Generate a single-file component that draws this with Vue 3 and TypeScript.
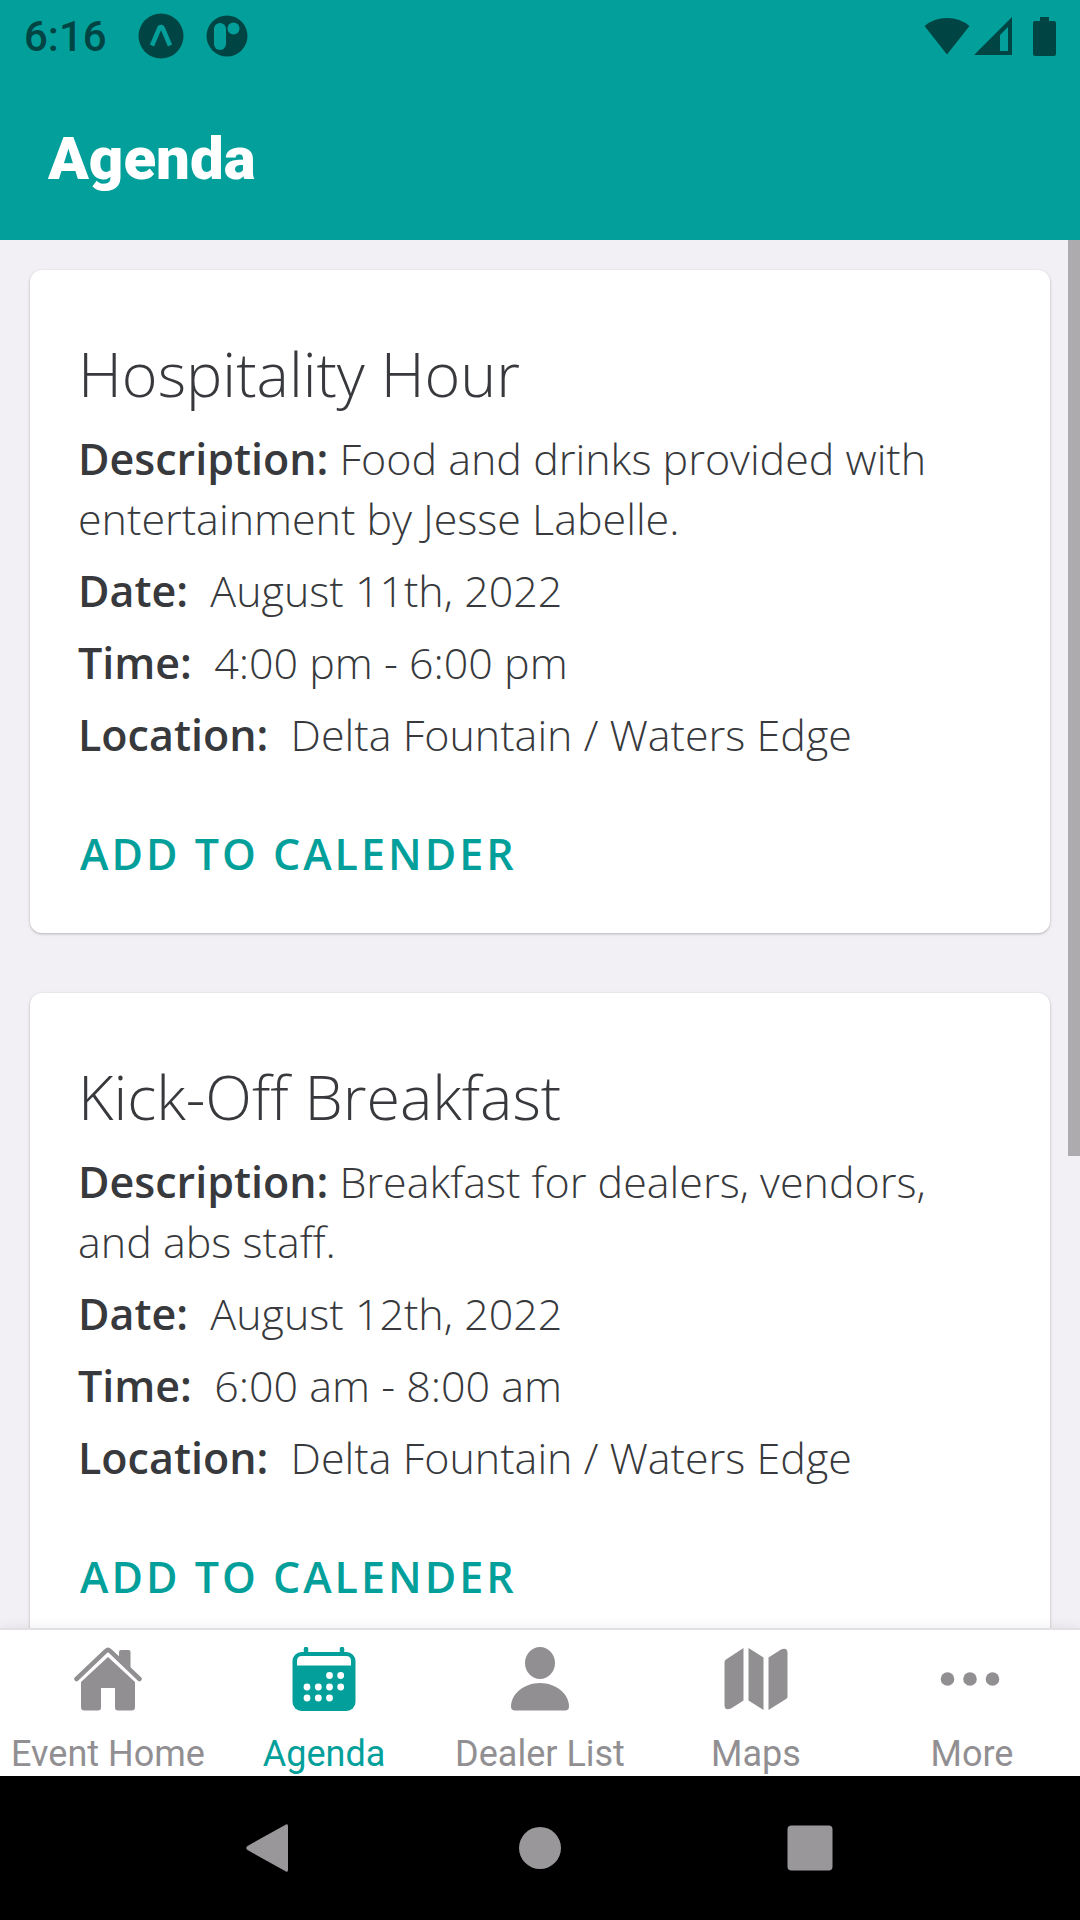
<script setup lang="ts">
import { ref } from 'vue'

interface AgendaItem {
  title: string
  description: string
  date: string
  time: string
  location: string
}

interface Tab {
  id: string
  label: string
}

const items: AgendaItem[] = [
  {
    title: 'Hospitality Hour',
    description: 'Food and drinks provided with entertainment by Jesse Labelle.',
    date: 'August 11th, 2022',
    time: '4:00 pm - 6:00 pm',
    location: 'Delta Fountain / Waters Edge',
  },
  {
    title: 'Kick-Off Breakfast',
    description: 'Breakfast for dealers, vendors, and abs staff.',
    date: 'August 12th, 2022',
    time: '6:00 am - 8:00 am',
    location: 'Delta Fountain / Waters Edge',
  },
]

const tabs: Tab[] = [
  { id: 'home', label: 'Event Home' },
  { id: 'agenda', label: 'Agenda' },
  { id: 'dealers', label: 'Dealer List' },
  { id: 'maps', label: 'Maps' },
  { id: 'more', label: 'More' },
]

const activeTab = ref('agenda')
</script>

<template>
  <div class="screen">
    <header class="header">
      <div class="status">
        <span class="clock">6:16</span>
        <svg class="status-app" width="46" height="46" viewBox="0 0 46 46" aria-hidden="true">
          <circle cx="23" cy="23" r="22.5" fill="#004543" />
          <path d="M14 32.500 L21 16 Q21.500 14 23 14 Q24.500 14 25 16 L32 32.500" fill="none" stroke="#03a09b" stroke-width="4.500" stroke-linejoin="round" />
        </svg>
        <svg class="status-app" width="42" height="42" viewBox="0 0 42 42" aria-hidden="true">
          <circle cx="21" cy="21" r="20.500" fill="#004543" />
          <rect x="8" y="8" width="12" height="27" rx="6" fill="#03a09b" />
          <circle cx="27.500" cy="13.500" r="6" fill="#03a09b" />
        </svg>
        <span class="spacer"></span>
        <svg class="wifi" width="46" height="38" viewBox="0 0 46 38" aria-hidden="true">
          <path d="M0.500 9 Q10 1 23 1 T45.500 9 L23 37.500 Z" fill="#004543" />
        </svg>
        <svg class="signal" width="38" height="38" viewBox="0 0 38 38" aria-hidden="true">
          <path fill-rule="evenodd" d="M38 0 V38 H0 Z M34 10 L26 18 V34 H34 Z" fill="#004543" />
        </svg>
        <svg class="battery" width="23" height="39" viewBox="0 0 23 39" aria-hidden="true">
          <path d="M7 0 H16 V4 H21 Q23 4 23 6 V37 Q23 39 21 39 H2 Q0 39 0 37 V6 Q0 4 2 4 H7 Z" fill="#004543" />
        </svg>
      </div>
      <h1 class="title">Agenda</h1>
    </header>

    <main class="content">
      <div class="list">
        <article v-for="item in items" :key="item.title" class="card">
          <h2>{{ item.title }}</h2>
          <p><strong>Description:</strong> {{ item.description }}</p>
          <p><strong>Date:</strong>&nbsp; {{ item.date }}</p>
          <p><strong>Time:</strong>&nbsp; {{ item.time }}</p>
          <p><strong>Location:</strong>&nbsp; {{ item.location }}</p>
          <button type="button" class="add">ADD TO CALENDER</button>
        </article>
      </div>
      <div class="scroll-thumb"></div>
    </main>

    <nav class="tabs">
      <button
        v-for="tab in tabs"
        :key="tab.id"
        type="button"
        class="tab"
        :class="{ active: tab.id === activeTab }"
        @click="activeTab = tab.id"
      >
        <svg v-if="tab.id === 'home'" width="68" height="64" viewBox="0 0 68 64" fill="currentColor" aria-hidden="true">
          <path d="M45 14 V5 Q45 3 47 3 H54.500 Q56.500 3 56.500 5 V30 L45 20 Z" />
          <path d="M2.500 37 L34 8 L65.500 37" fill="none" stroke="#fff" stroke-width="5" />
          <path d="M2.500 32 L32 4 Q34 2 36 4 L65.500 32" fill="none" stroke="currentColor" stroke-width="4.500" stroke-linecap="round" />
          <path d="M34 10 L61 35 V60 Q61 63.500 57.500 63.500 H44 Q41 63.500 41 60.500 V41 H27 V60.500 Q27 63.500 24 63.500 H10.500 Q7 63.500 7 60 V35 Z" />
        </svg>
        <svg v-else-if="tab.id === 'agenda'" width="64" height="64" viewBox="0 0 64 64" fill="currentColor" aria-hidden="true">
          <rect x="0.500" y="5" width="63" height="59" rx="9" />
          <path d="M14 2 V8 M50 2 V8" stroke="currentColor" stroke-width="4.500" stroke-linecap="round" />
          <path d="M5 18.500 V14 Q5 9 10 9 H54 Q59 9 59 14 V18.500 Z" fill="#fff" />
          <g fill="#fff">
            <circle cx="37.500" cy="28.500" r="3.400" />
            <circle cx="48.700" cy="28.500" r="3.400" />
            <circle cx="15" cy="40" r="3.400" />
            <circle cx="26.300" cy="40" r="3.400" />
            <circle cx="37.500" cy="40" r="3.400" />
            <circle cx="48.700" cy="40" r="3.400" />
            <circle cx="15" cy="51" r="3.400" />
            <circle cx="26.300" cy="51" r="3.400" />
            <circle cx="37.500" cy="51" r="3.400" />
          </g>
        </svg>
        <svg v-else-if="tab.id === 'dealers'" width="58" height="64" viewBox="0 0 58 64" fill="currentColor" aria-hidden="true">
          <ellipse cx="29" cy="16" rx="15" ry="16" />
          <path d="M4 63.500 Q0 63.500 0 59.500 C0 47 13 36 29 36 S58 47 58 59.500 Q58 63.500 54 63.500 Z" />
        </svg>
        <svg v-else-if="tab.id === 'maps'" width="64" height="64" viewBox="0 0 64 64" fill="currentColor" aria-hidden="true">
          <path d="M19.500 1 V53.500 L7 61.500 Q0.500 64 0.500 58 V15 Q0.500 13.500 2 12.500 Z" />
          <path d="M24.500 1 L39.500 10.500 V63 L24.500 53.500 Z" />
          <path d="M44.500 10.500 L57 2.500 Q63.500 0 63.500 6 V49.500 Q63.500 51 62 52 L44.500 63 Z" />
        </svg>
        <svg v-else width="64" height="64" viewBox="0 0 64 64" fill="currentColor" aria-hidden="true">
          <circle cx="7.500" cy="32" r="6.800" />
          <circle cx="30" cy="32" r="6.800" />
          <circle cx="52.500" cy="32" r="6.800" />
        </svg>
        <span>{{ tab.label }}</span>
      </button>
    </nav>

    <footer class="system-nav">
      <button type="button" aria-label="Back">
        <svg width="48" height="48" viewBox="0 0 48 48"><path d="M40 0.500 Q42 -0.500 42 2.500 V45.500 Q42 48.500 40 47.500 L1.500 26 Q-1 24 1.500 22 Z" fill="#9a979b" /></svg>
      </button>
      <button type="button" aria-label="Home">
        <svg width="48" height="48" viewBox="0 0 48 48"><circle cx="24" cy="24" r="21" fill="#9a979b" /></svg>
      </button>
      <button type="button" aria-label="Recent apps">
        <svg width="48" height="48" viewBox="0 0 48 48"><rect x="1.500" y="1.500" width="45" height="45" rx="4" fill="#9a979b" /></svg>
      </button>
    </footer>
  </div>
</template>

<style>
body {
  margin: 0;
}
</style>

<style scoped>
.screen {
  display: flex;
  flex-direction: column;
  height: 100vh;
  background: #f2f0f4;
  font-family: Roboto, sans-serif;
}

button {
  margin: 0;
  padding: 0;
  border: 0;
  background: none;
  font: inherit;
  cursor: pointer;
}

.header {
  flex: none;
  background: #03a09b;
}

.status {
  display: flex;
  align-items: center;
  height: 72px;
  padding: 0 24px;
}

.clock {
  margin-right: 31px;
  color: #004543;
  font-size: 42px;
  font-weight: 500;
}

.status-app {
  margin-right: 22px;
}

.spacer {
  flex: 1;
}

.signal {
  margin: 0 21px 0 4px;
}

.title {
  margin: 0;
  padding: 51px 48px 45px;
  color: #fff;
  font-size: 60px;
  font-weight: 900;
  line-height: 72px;
}

.content {
  position: relative;
  flex: 1;
  min-height: 0;
  overflow: hidden;
}

.list {
  display: flex;
  flex-direction: column;
  gap: 60px;
  padding: 30px;
}

.card {
  padding: 61px 48px 48px;
  border-radius: 12px;
  background: #fff;
  box-shadow: 0 1px 3px rgba(0, 0, 0, 0.26);
  color: #37393c;
  font-family: 'Open Sans', sans-serif;
}

.card h2 {
  margin: 0;
  font-size: 61px;
  font-weight: 300;
  line-height: 86px;
}

.card p {
  margin: 12px 0 0;
  font-size: 43px;
  font-weight: 300;
  line-height: 60px;
}

.card strong {
  font-weight: 600;
}

.card .add {
  display: block;
  margin-top: 60px;
  padding: 0 2px;
  color: #03a09b;
  font-size: 43px;
  font-weight: 600;
  line-height: 58px;
  letter-spacing: 3px;
  padding-bottom: 2px;
}

.scroll-thumb {
  position: absolute;
  top: 0;
  right: 0;
  width: 12px;
  height: 66%;
  background: #adabae;
}

.tabs {
  position: relative;
  display: flex;
  flex: none;
  border-top: 2px solid #e2e0e4;
  background: #fff;
  box-shadow: 0 0 12px rgba(0, 0, 0, 0.08);
}

.tab {
  display: flex;
  flex: 1 1 0;
  flex-direction: column;
  align-items: center;
  gap: 22px;
  min-width: 0;
  padding: 17px 0 1px;
  color: #918f92;
  font-size: 36px;
  line-height: 42px;
  white-space: nowrap;
}

.tab.active {
  color: #03a09b;
}

.system-nav {
  position: relative;
  display: flex;
  flex: none;
  height: 144px;
  padding: 0 12.5%;
  background: #000;
}

.system-nav button {
  display: flex;
  flex: 1;
  align-items: center;
  justify-content: center;
}
</style>
